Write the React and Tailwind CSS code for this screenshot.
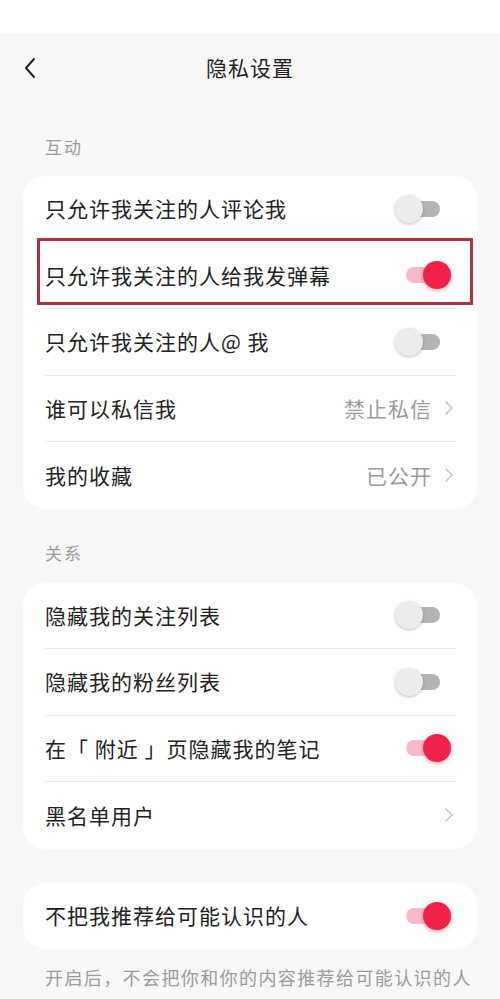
import React from "react";

const font = { fontFamily: '"Noto Sans CJK SC", "Noto Sans", sans-serif' };

const Toggle = ({ on }) => (
    <div className="relative w-[56px] h-[28px] mr-[5px] shrink-0">
        {on ? (
            <>
                <div className="absolute left-[11px] top-[6px] w-[40px] h-[16px] rounded-full bg-[#f7bac6]"></div>
                <div className="absolute left-[28px] top-0 w-[28px] h-[28px] rounded-full bg-[#ef2249] shadow-[0_2px_4px_rgba(200,30,60,0.35)]"></div>
            </>
        ) : (
            <>
                <div className="absolute left-[5px] top-[6px] w-[40px] h-[16px] rounded-full bg-[#b4b4b4]"></div>
                <div className="absolute left-0 top-0 w-[28px] h-[28px] rounded-full bg-[#ececec] shadow-[0_1px_3px_rgba(0,0,0,0.25)]"></div>
            </>
        )}
    </div>
);

const Chevron = () => (
    <svg width="10" height="16" viewBox="0 0 10 16" className="ml-[12px] mr-[2px] shrink-0">
        <path d="M2 2 L8 8 L2 14" fill="none" stroke="#c2c2c2" strokeWidth="1.5" strokeLinecap="round" strokeLinejoin="round" />
    </svg>
);

const Row = ({ label, toggle, value, arrow, last }) => (
    <div className={"h-[66.5px] flex items-center justify-between " + (last ? "" : "border-b border-[#e9e9e9]")}>
        <span className="text-[21px] tracking-[1px] text-[#222]">{label}</span>
        {toggle !== undefined && <Toggle on={toggle} />}
        {arrow && (
            <div className="flex items-center">
                {value && <span className="text-[21px] tracking-[1px] text-[#9a9a9a]">{value}</span>}
                <Chevron />
            </div>
        )}
    </div>
);

const SectionLabel = ({ children, className }) => (
    <div className={"px-[45px] text-[17px] tracking-[2px] leading-[24px] text-[#9b9b9b] " + className}>{children}</div>
);

export default function App() {
    return (
        <div className="w-[500px] h-[999px] bg-[#f8f8f8] overflow-hidden" style={font}>
            <div className="h-[33px] bg-white"></div>

            {/* header */}
            <div className="relative h-[70px] flex items-center justify-center">
                <svg width="14" height="22" viewBox="0 0 14 22" className="absolute left-[23px] top-[24px]">
                    <path d="M11 2 L3 11 L11 20" fill="none" stroke="#222" strokeWidth="2" strokeLinecap="round" strokeLinejoin="round" />
                </svg>
                <span className="text-[21px] tracking-[1px] text-[#222]">隐私设置</span>
            </div>

            <SectionLabel className="mt-[32px]">互动</SectionLabel>
            <div className="relative mt-[17px] mx-[23px] bg-white rounded-[22px] pl-[22px] pr-[21px]">
                <Row label="只允许我关注的人评论我" toggle={false} />
                <Row label="只允许我关注的人给我发弹幕" toggle={true} />
                <Row label="只允许我关注的人@ 我" toggle={false} />
                <Row label="谁可以私信我" value="禁止私信" arrow />
                <Row label="我的收藏" value="已公开" arrow last />
                <div className="absolute left-[14px] right-[4px] top-[62px] h-[67px] border-[3px] border-[#b0303c]"></div>
            </div>

            <SectionLabel className="mt-[32px]">关系</SectionLabel>
            <div className="mt-[18px] mx-[23px] bg-white rounded-[22px] pl-[22px] pr-[21px]">
                <Row label="隐藏我的关注列表" toggle={false} />
                <Row label="隐藏我的粉丝列表" toggle={false} />
                <Row label="在「 附近 」页隐藏我的笔记" toggle={true} />
                <Row label="黑名单用户" arrow last />
            </div>

            <div className="mt-[34px] mx-[23px] bg-white rounded-[22px] pl-[22px] pr-[21px]">
                <Row label="不把我推荐给可能认识的人" toggle={true} last />
            </div>

            <div className="mt-[16px] px-[45px] text-[18px] tracking-[1.4px] leading-[24px] text-[#9b9b9b] whitespace-nowrap">
                开启后，不会把你和你的内容推荐给可能认识的人
            </div>
        </div>
    );
}
